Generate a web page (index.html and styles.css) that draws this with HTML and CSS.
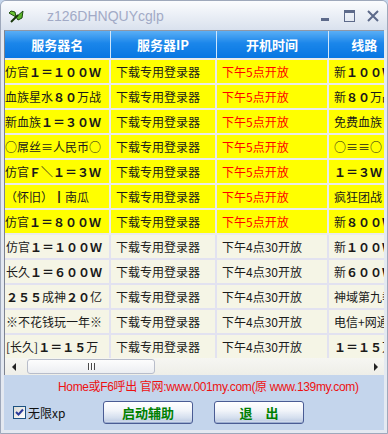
FILE: index.html
```html
<!DOCTYPE html>
<html lang="zh-CN">
<head>
    <meta charset="UTF-8">
    <meta name="viewport" content="width=device-width, initial-scale=1.0">
    <title>z126DHNQUYcglp</title>
    <link rel="stylesheet" href="styles.css">
</head>
<body>
    <div class="window">
        <div class="titlebar">
            <svg class="app-icon" width="16" height="16" viewBox="0 0 16 16">
                <path d="M8 9 L1 5 L3 3 L7 4 Z" fill="#6cc634" stroke="#1d4b0e" stroke-width="1"/>
                <path d="M8 9 L15 3 L14 10 L10 12 Z" fill="#5bb52a" stroke="#1d4b0e" stroke-width="1"/>
                <path d="M3 14 L10 7" stroke="#17360a" stroke-width="2"/>
            </svg>
            <span class="title">z126DHNQUYcglp</span>
            <div class="controls">
                <span class="ctl"><span class="ctl-min"></span></span>
                <span class="ctl"><span class="ctl-max"></span></span>
                <span class="ctl">
                    <svg width="12" height="12" viewBox="0 0 12 12">
                        <path d="M1 1 L11 11 M11 1 L1 11" stroke="#5d6a8a" stroke-width="2"/>
                    </svg>
                </span>
            </div>
        </div>

        <div class="client">
            <div class="grid">
                <div class="grid-view">
                    <table class="servers">
                        <colgroup>
                            <col class="c-name">
                            <col class="c-ip">
                            <col class="c-time">
                            <col class="c-line">
                        </colgroup>
                        <thead>
                            <tr>
                                <th>服务器名</th>
                                <th>服务器IP</th>
                                <th>开机时间</th>
                                <th>线路</th>
                            </tr>
                        </thead>
                        <tbody>
                            <tr class="hot">
                                <td class="name">仿官<b>１＝１００Ｗ</b></td>
                                <td>下载专用登录器</td>
                                <td class="time">下午5点开放</td>
                                <td>新<b>１００Ｗ</b></td>
                            </tr>
                            <tr class="hot">
                                <td class="name">血族星水<b>８０</b>万战</td>
                                <td>下载专用登录器</td>
                                <td class="time">下午5点开放</td>
                                <td>新<b>８０</b>万战</td>
                            </tr>
                            <tr class="hot">
                                <td class="name">新血族<b>１＝３０Ｗ</b></td>
                                <td>下载专用登录器</td>
                                <td class="time">下午5点开放</td>
                                <td>免费血族</td>
                            </tr>
                            <tr class="hot">
                                <td class="name">○屌丝≡人民币○</td>
                                <td>下载专用登录器</td>
                                <td class="time">下午5点开放</td>
                                <td>○≡≡○</td>
                            </tr>
                            <tr class="hot">
                                <td class="name">仿官<b>Ｆ＼１＝３Ｗ</b></td>
                                <td>下载专用登录器</td>
                                <td class="time">下午5点开放</td>
                                <td><b>１＝３Ｗ</b></td>
                            </tr>
                            <tr class="hot">
                                <td class="name">（怀旧）<b>┃</b>南瓜</td>
                                <td>下载专用登录器</td>
                                <td class="time">下午5点开放</td>
                                <td>疯狂团战</td>
                            </tr>
                            <tr class="hot">
                                <td class="name">仿官<b>１＝８００Ｗ</b></td>
                                <td>下载专用登录器</td>
                                <td class="time">下午5点开放</td>
                                <td>新<b>８００Ｗ</b></td>
                            </tr>
                            <tr class="old">
                                <td class="name">仿官<b>１＝１００Ｗ</b></td>
                                <td>下载专用登录器</td>
                                <td class="time">下午4点30开放</td>
                                <td>新<b>１００Ｗ</b></td>
                            </tr>
                            <tr class="old">
                                <td class="name">长久<b>１＝６００Ｗ</b></td>
                                <td>下载专用登录器</td>
                                <td class="time">下午4点30开放</td>
                                <td>新<b>６００Ｗ</b></td>
                            </tr>
                            <tr class="old">
                                <td class="name"><b>２５５</b>成神<b>２０</b>亿</td>
                                <td>下载专用登录器</td>
                                <td class="time">下午4点30开放</td>
                                <td>神域第九季</td>
                            </tr>
                            <tr class="old">
                                <td class="name">※不花钱玩一年※</td>
                                <td>下载专用登录器</td>
                                <td class="time">下午4点30开放</td>
                                <td>电信+网通</td>
                            </tr>
                            <tr class="old">
                                <td class="name">[长久]<b>１＝１５</b>万</td>
                                <td>下载专用登录器</td>
                                <td class="time">下午4点30开放</td>
                                <td><b>１＝１５</b>万</td>
                            </tr>
                        </tbody>
                    </table>
                </div>
                <div class="hscroll">
                    <span class="arrow arrow-left"></span>
                    <span class="thumb"><span class="grip"></span></span>
                    <span class="arrow arrow-right"></span>
                </div>
            </div>

            <p class="notice">Home或F6呼出 官网:www.001my.com(原 www.139my.com)</p>

            <div class="actions">
                <label class="check">
                    <span class="box">
                        <svg width="9" height="9" viewBox="0 0 9 9">
                            <path d="M1 4 L3.5 6.5 L8 1.5" fill="none" stroke="#2b3b9a" stroke-width="2"/>
                        </svg>
                    </span>
                    无限xp
                </label>
                <button type="button" class="btn">启动辅助</button>
                <button type="button" class="btn">退　出</button>
            </div>
        </div>
    </div>
</body>
</html>
```

FILE: styles.css
```css
body {
    margin: 0;
    padding: 0;
    font-family: "Noto Sans CJK SC", sans-serif;
    background-color: #c4d5ec;
}

.window {
    width: 388px;
    height: 434px;
    box-sizing: border-box;
    border: 1px solid #9ea8bb;
    border-radius: 6px 6px 0 0;
    background-color: #c4d5ec;
    display: flex;
    flex-direction: column;
    overflow: hidden;
}

/* title bar */
.titlebar {
    height: 29px;
    flex: none;
    display: flex;
    align-items: center;
    padding-left: 7px;
    background: linear-gradient(#fbfcfe, #e7ecf4 60%, #d9e1ee);
}

.app-icon {
    flex: none;
}

.title {
    margin-left: 23px;
    font-family: "Liberation Sans", sans-serif;
    font-size: 14px;
    color: #a2aac6;
}

.controls {
    margin-left: auto;
    padding-right: 2px;
    display: flex;
}

.ctl {
    width: 24px;
    height: 24px;
    display: flex;
    align-items: center;
    justify-content: center;
}

.ctl-min {
    width: 8px;
    height: 3px;
    margin-top: 8px;
    background-color: #5d6a8a;
}

.ctl-max {
    width: 9px;
    height: 8px;
    border: 1px solid #5d6a8a;
    border-top-width: 3px;
}

/* client area */
.client {
    flex: 1;
    border: 3px solid #e4e9f1;
    border-top: 0;
    display: flex;
    flex-direction: column;
}

.grid {
    height: 344px;
    flex: none;
    border-left: 1px solid #7d8390;
    border-top: 1px solid #8f97a6;
    background-color: #fff;
    display: flex;
    flex-direction: column;
}

.grid-view {
    flex: 1;
    overflow: hidden;
}

.servers {
    table-layout: fixed;
    width: 395px;
    border-collapse: collapse;
    font-size: 12px;
}

.c-name { width: 105px; }
.c-ip { width: 106px; }
.c-time { width: 112px; }
.c-line { width: 72px; }

.servers th {
    height: 27px;
    padding: 0;
    color: #fff;
    font-size: 13px;
    font-weight: bold;
    text-align: center;
    border-left: 1px solid #cfe6fb;
    background: linear-gradient(#5aaef5, #1b86ea 45%, #0776e2);
}

.servers th:first-child {
    border-left: 0;
}

.servers td {
    height: 23px;
    padding: 0 0 0 5px;
    white-space: nowrap;
    overflow: hidden;
    color: #1a1a1a;
    border: 2px solid #ebebeb;
}

.servers td.name {
    padding-left: 0;
    border-left: 0;
}

.servers b {
    font-weight: bold;
}

.hot td {
    background-color: #ffff00;
}

.hot td.time {
    color: #f00;
}

.old td {
    background-color: #f5f5e6;
    border-color: #e2e2f0;
}

.old td.name {
    padding-left: 1px;
}

/* horizontal scroll bar */
.hscroll {
    height: 17px;
    flex: none;
    display: flex;
    align-items: center;
    background: linear-gradient(#f6f6f2, #eeeee8);
}

.arrow {
    width: 0;
    height: 0;
    border-top: 4px solid transparent;
    border-bottom: 4px solid transparent;
}

.arrow-left {
    margin-left: 7px;
    border-right: 4px solid #222;
}

.arrow-right {
    margin-left: auto;
    margin-right: 6px;
    border-left: 4px solid #222;
}

.thumb {
    width: 126px;
    height: 13px;
    margin-left: 11px;
    border: 1px solid #b8bdca;
    border-radius: 3px;
    background: linear-gradient(#fdfdfd, #eceef2);
    display: flex;
    align-items: center;
    justify-content: center;
}

.grip {
    width: 7px;
    height: 7px;
    background: repeating-linear-gradient(90deg, #4a4a4a 0 1px, #fff 1px 2px, transparent 2px 3px);
}

/* bottom part */
.notice {
    margin: 4px 0 0;
    padding-left: 54px;
    height: 16px;
    line-height: 16px;
    font-family: "Liberation Sans", "Noto Sans CJK SC", sans-serif;
    font-size: 12px;
    letter-spacing: -0.35px;
    color: #ee1111;
    white-space: nowrap;
}

.actions {
    margin-top: 6px;
    height: 23px;
    padding-left: 9px;
    display: flex;
    align-items: center;
}

.check {
    width: 90px;
    display: flex;
    align-items: center;
    font-size: 12px;
    color: #111;
}

.box {
    width: 11px;
    height: 11px;
    margin-right: 2px;
    border: 1px solid #1c5180;
    background: linear-gradient(135deg, #dcdcd6, #fff);
    display: flex;
    align-items: center;
    justify-content: center;
}

.btn {
    width: 90px;
    height: 23px;
    margin-right: 21px;
    padding: 0;
    border: 1px solid #4a5c94;
    border-radius: 3px;
    background: linear-gradient(#ffffff, #f2f5fa 40%, #d5dfee 75%, #c3d0e6 90%, #e9eef6);
    box-shadow: inset 0 -1px 0 #9caed0;
    color: #008000;
    font-family: "Noto Sans CJK SC", sans-serif;
    font-size: 13px;
    font-weight: bold;
    cursor: pointer;
}
```
